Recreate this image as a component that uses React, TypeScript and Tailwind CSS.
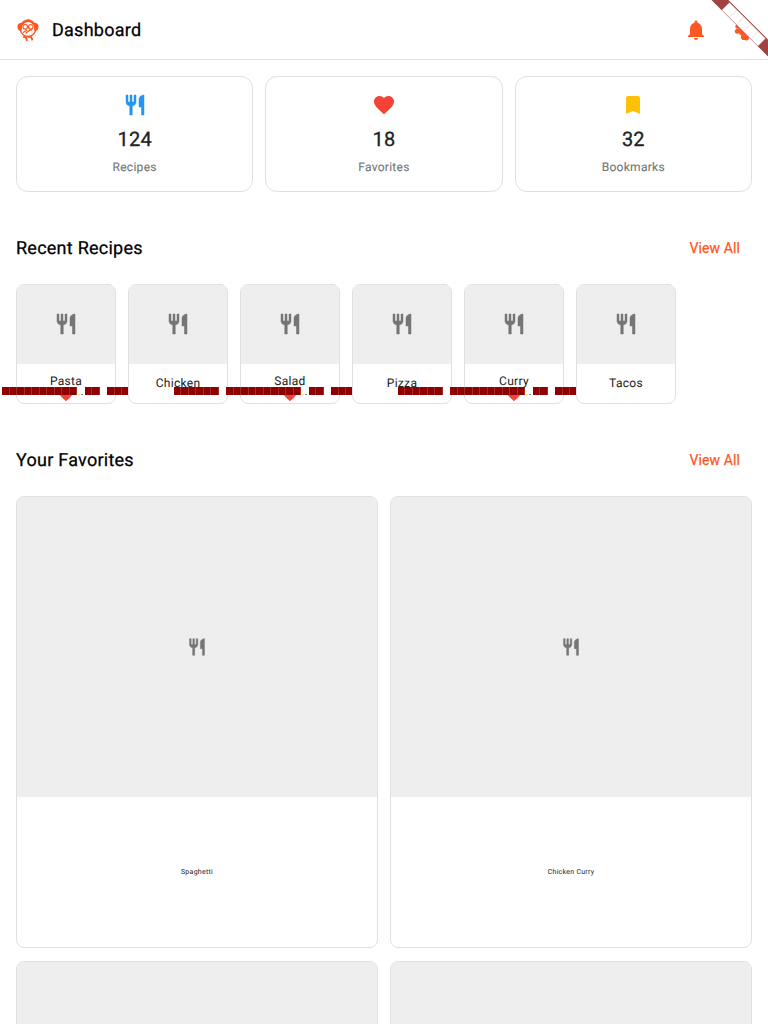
import type { ReactNode } from "react";
import { MdFavorite, MdBookmark, MdNotifications } from "react-icons/md";

const recipes = [
  { name: "Pasta", favorite: true },
  { name: "Chicken", favorite: false },
  { name: "Salad", favorite: true },
  { name: "Pizza", favorite: false },
  { name: "Curry", favorite: true },
  { name: "Tacos", favorite: false },
];

function Cutlery({ size, color }: { size: number; color: string }) {
  return (
    <svg width={size} height={size} viewBox="0 0 24 24" fill={color} stroke={color} strokeWidth="0.5">
      <path d="M11 9H9V2H7v7H5V2H3v7c0 2.12 1.66 3.84 3.75 3.97V22h2.5v-9.03C11.34 12.84 13 11.12 13 9V2h-2v7zm5-3v8h2.5v8H21V2c-2.76 0-5 2.24-5 4z" />
    </svg>
  );
}

function Logo() {
  return (
    <svg width="24" height="24" viewBox="0 0 24 24" fill="none" stroke="#ff5722" strokeWidth="1.5" strokeLinecap="round">
      <circle cx="12" cy="10.9" r="7.6" />
      <path d="M6 6C7.5 3.4 9.8 2.6 12 2.6s4.5.8 6 3.4" strokeWidth="2.3" />
      <path d="M12 2.2 12.8 1.600" />
      <path d="M5.4 5.4C2.7 5.4 1.8 8 2.3 9.9c.3 1.5 1.5 2.3 2.7 2.2ZM18.6 5.4c2.7 0 3.6 2.6 3.1 4.5-.3 1.5-1.5 2.3-2.7 2.2Z" fill="#ff5722" />
      <circle cx="9.2" cy="8.8" r="2.3" strokeWidth="1.2" />
      <circle cx="14.8" cy="8.8" r="2.3" strokeWidth="1.2" />
      <path d="M7.5 14.3l3-2.100M10 15l4-3h1.500" strokeWidth="1.3" />
      <path d="M8 18.800l2.200 1 .6 2.400M12.800 18.800l2.400.4 1 2.300" strokeWidth="1.9" />
    </svg>
  );
}

function SettingsIcon() {
  return (
    <svg width="24" height="24" viewBox="0 0 24 24" fill="#ff5722">
      <circle cx="12" cy="12" r="6" />
      <circle cx="5.5" cy="8.6" r="2.2" />
      <circle cx="5.4" cy="13.2" r="2.5" />
      <circle cx="11.8" cy="19.3" r="2.8" />
      <circle cx="14.4" cy="19.8" r="2.6" />
    </svg>
  );
}

function OverflowLabel() {
  return (
    <div className="absolute top-[102px] -left-[67.5px] flex h-2 gap-[7.5px]">
      {[6, 10, 2, 4].map((count, i) => (
        <div key={i} className="flex">
          {Array.from({ length: count }, (_, j) => (
            <span key={j} className="h-2 w-[7.5px] border-r border-[#a02c2c] bg-[#900000]" />
          ))}
        </div>
      ))}
      <span className="absolute top-[7px] left-[128px] h-px w-[2px] bg-[#ffe94d]" />
      <span className="absolute top-[7px] left-[131px] h-px w-[2px] bg-[#888]" />
    </div>
  );
}

function DebugBanner() {
  return (
    <svg className="absolute top-0 right-0" width="80" height="80" viewBox="-80 0 80 80">
      <g transform="rotate(45)">
        <rect x="-40" y="28" width="80" height="12" fill="#a24141" />
        <rect x="-25.5" y="29" width="51" height="10.6" fill="#fff" />
        <path d="M-15.3 29v10.6M-5.1 29v10.6M5.1 29v10.6M15.3 29v10.6" stroke="#a24141" strokeOpacity=".4" strokeWidth=".4" />
      </g>
    </svg>
  );
}

function Stat({ icon, value, label }: { icon: ReactNode; value: string; label: string }) {
  return (
    <div className="flex h-[116px] flex-1 flex-col items-center rounded-xl border border-[#e0e0e0] pt-4">
      {icon}
      <div className="mt-2 text-[20px] leading-7 tracking-[0.2px] text-[#212121] [-webkit-text-stroke:0.3px]">{value}</div>
      <div className="mt-[5px] text-xs leading-[18px] tracking-[0.28px] text-[#757575] [-webkit-text-stroke:0.1px]">{label}</div>
    </div>
  );
}

function SectionTitle({ title }: { title: string }) {
  return (
    <div className="flex h-12 items-center justify-between pr-3">
      <h2 className="pt-px text-lg leading-6 tracking-[0.25px] [-webkit-text-stroke:0.25px]">{title}</h2>
      <button className="text-sm tracking-[0.1px] text-[#ff5722] [-webkit-text-stroke:0.25px]">View All</button>
    </div>
  );
}

function FavoriteCard({ name }: { name: string }) {
  return (
    <div className="flex h-[452px] flex-col overflow-hidden rounded-lg border border-[#e0e0e0]">
      <div className="flex h-[300px] shrink-0 items-center justify-center bg-[#eee]">
        <Cutlery size={20} color="#757575" />
      </div>
      <div className="flex flex-1 items-center justify-center text-[7px] tracking-[0.27px] text-[#212121]">{name}</div>
    </div>
  );
}

export default function App() {
  return (
    <div className="relative h-[1024px] w-[768px] overflow-hidden bg-white font-['Roboto',sans-serif] text-black [text-rendering:geometricPrecision]">
      <header className="flex h-[60px] items-center border-b border-[#e0e0e0] pl-4">
        <Logo />
        <h1 className="ml-3 flex-1 pt-0.5 text-lg tracking-[0.25px] [-webkit-text-stroke:0.25px]">Dashboard</h1>
        <div className="flex w-12 justify-center"><MdNotifications size={24} color="#ff5722" /></div>
        <div className="flex w-12 justify-center"><SettingsIcon /></div>
      </header>
      <main className="px-4 pt-4">
        <div className="flex gap-3">
          <Stat icon={<Cutlery size={24} color="#2196f3" />} value="124" label="Recipes" />
          <Stat icon={<MdFavorite size={24} color="#f44336" />} value="18" label="Favorites" />
          <Stat icon={<MdBookmark size={24} color="#ffc107" />} value="32" label="Bookmarks" />
        </div>
        <section className="mt-8">
          <SectionTitle title="Recent Recipes" />
          <div className="mt-3 flex gap-3">
            {recipes.map((r) => (
              <div key={r.name} className="relative h-[120px] w-[100px] rounded-lg border border-[#e0e0e0] bg-white">
                <div className="flex h-[79px] items-center justify-center rounded-t-[7px] bg-[#eee] pb-px">
                  <Cutlery size={24} color="#757575" />
                </div>
                <div className={r.favorite ? "flex flex-col items-center pt-2 text-xs leading-[18px] tracking-[0.3px] text-[#212121]" : "flex flex-col items-center pt-[10px] text-xs leading-[18px] tracking-[0.3px] text-[#212121]"}>
                  {r.name}
                  {r.favorite && <MdFavorite className="-mt-[3px]" size={16} color="#f44336" />}
                </div>
                {r.favorite && <OverflowLabel />}
              </div>
            ))}
          </div>
        </section>
        <section className="mt-8">
          <SectionTitle title="Your Favorites" />
          <div className="mt-3 grid grid-cols-2 gap-x-3 gap-y-[13px]">
            <FavoriteCard name="Spaghetti" />
            <FavoriteCard name="Chicken Curry" />
            <FavoriteCard name="" />
            <FavoriteCard name="" />
          </div>
        </section>
      </main>
      <DebugBanner />
    </div>
  );
}
